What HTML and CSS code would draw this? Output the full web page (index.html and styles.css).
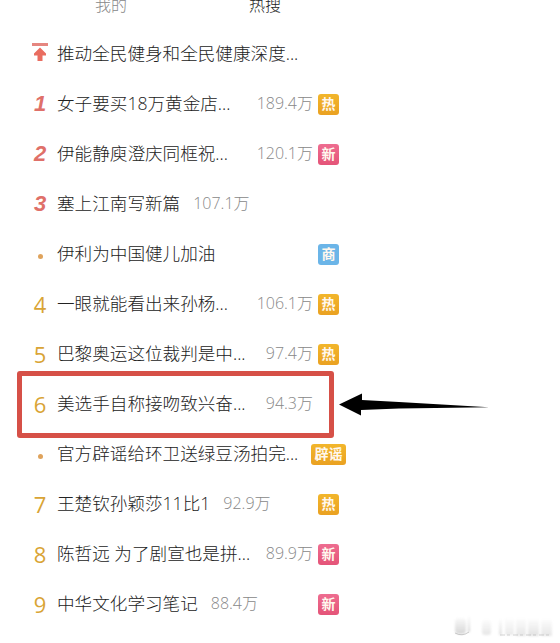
FILE: index.html
```html
<!DOCTYPE html>
<html lang="zh-CN">
  <head>
    <meta charset="UTF-8" />
    <meta name="viewport" content="width=device-width, initial-scale=1" />
    <title>热搜</title>
    <link rel="stylesheet" href="styles.css">
  </head>
  <body>
    <div class="tabs">
      <span class="tab">我的</span>
      <span class="tab active">热搜</span>
    </div>

    <ul class="hot-list">
      <li class="row">
        <span class="rank">
          <svg class="pin" width="16" height="19" viewBox="0 0 16 19">
            <rect x="0" y="0" width="16" height="3" fill="#e58680" />
            <path d="M8 4.5L14 10.5V12.5H10.5V18H5.5V12.5H2V10.5Z" fill="#e96d60" />
          </svg>
        </span>
        <div class="main"><span class="title">推动全民健身和全民健康深度...</span></div>
      </li>
      <li class="row">
        <span class="rank top">1</span>
        <div class="main cut"><span class="title">女子要买18万黄金店...</span><span class="heat">189.4万</span></div>
        <span class="tag hot">热</span>
      </li>
      <li class="row">
        <span class="rank top">2</span>
        <div class="main cut"><span class="title">伊能静庾澄庆同框祝...</span><span class="heat">120.1万</span></div>
        <span class="tag new">新</span>
      </li>
      <li class="row">
        <span class="rank top">3</span>
        <div class="main"><span class="title">塞上江南写新篇</span><span class="heat">107.1万</span></div>
      </li>
      <li class="row">
        <span class="rank"><i class="dot"></i></span>
        <div class="main"><span class="title">伊利为中国健儿加油</span></div>
        <span class="tag ad">商</span>
      </li>
      <li class="row">
        <span class="rank">4</span>
        <div class="main cut"><span class="title">一眼就能看出来孙杨...</span><span class="heat">106.1万</span></div>
        <span class="tag hot">热</span>
      </li>
      <li class="row">
        <span class="rank">5</span>
        <div class="main cut"><span class="title">巴黎奥运这位裁判是中...</span><span class="heat">97.4万</span></div>
        <span class="tag hot">热</span>
      </li>
      <li class="row">
        <span class="rank">6</span>
        <div class="main cut"><span class="title">美选手自称接吻致兴奋...</span><span class="heat">94.3万</span></div>
        <div class="mark"></div>
        <svg class="arrow" width="152" height="24" viewBox="0 0 152 24">
          <path d="M0 11.5L23 0.5V7L60 9L150 14.2L60 15.5L22 17V22.5Z" fill="#000" />
        </svg>
      </li>
      <li class="row">
        <span class="rank"><i class="dot"></i></span>
        <div class="main"><span class="title">官方辟谣给环卫送绿豆汤拍完...</span></div>
        <span class="tag hot wide">辟谣</span>
      </li>
      <li class="row">
        <span class="rank">7</span>
        <div class="main"><span class="title">王楚钦孙颖莎11比1</span><span class="heat">92.9万</span></div>
        <span class="tag hot">热</span>
      </li>
      <li class="row">
        <span class="rank">8</span>
        <div class="main cut"><span class="title">陈哲远 为了剧宣也是拼...</span><span class="heat">89.9万</span></div>
        <span class="tag new">新</span>
      </li>
      <li class="row">
        <span class="rank">9</span>
        <div class="main"><span class="title">中华文化学习笔记</span><span class="heat">88.4万</span></div>
        <span class="tag new">新</span>
      </li>
    </ul>

    <!-- faded watermark -->
    <svg class="watermark" width="106" height="26" viewBox="0 0 106 26">
      <defs>
        <linearGradient id="fade" x1="0" y1="0" x2="0" y2="1">
          <stop offset="0" stop-color="#999" stop-opacity="0.05" />
          <stop offset="1" stop-color="#999" stop-opacity="0.4" />
        </linearGradient>
      </defs>
      <g class="smudge" fill="url(#fade)">
        <rect x="5" y="3" width="11" height="16" rx="4" />
        <rect x="18" y="2" width="2" height="15" />
        <rect x="32" y="5" width="9" height="15" rx="3" opacity="0.6" />
        <rect x="49" y="5" width="3" height="15" opacity="0.7" />
        <rect x="55" y="4" width="9" height="16" opacity="0.5" />
        <rect x="66" y="4" width="10" height="17" opacity="0.6" />
        <rect x="78" y="5" width="11" height="16" opacity="0.7" />
        <rect x="91" y="5" width="11" height="16" opacity="0.6" />
      </g>
      <path d="M5 18Q12 22 19 17" fill="none" stroke="#999" stroke-opacity="0.5" />
      <path d="M50 20H102" fill="none" stroke="#999" stroke-opacity="0.4" stroke-dasharray="5 2 3 3" />
    </svg>
  </body>
</html>
```

FILE: styles.css
```css
* {
  box-sizing: border-box;
}
body {
  position: relative;
  margin: 0;
  height: 643px;
  overflow: hidden;
  background: #fff;
  color: #222;
  font-family: "Open Sans", "Noto Sans CJK SC", sans-serif;
  font-weight: 300;
}
.tabs {
  display: flex;
  height: 29px;
  padding-left: 34px;
}
.tab {
  width: 154px;
  margin-top: -7px;
  text-align: center;
  font-size: 16px;
  line-height: 24px;
  color: #888;
}
.tab.active {
  color: #222;
}
.hot-list {
  list-style: none;
  margin: 0;
  padding: 0;
}
.row {
  position: relative;
  display: flex;
  align-items: center;
  width: 346px;
  height: 50px;
  padding-left: 23px;
}
.rank {
  display: flex;
  justify-content: center;
  width: 34px;
  font-size: 22px;
  font-weight: 500;
  line-height: 30px;
  color: #d9a435;
}
.rank.top {
  font-family: "Liberation Sans", sans-serif;
  font-size: 22px;
  font-weight: 700;
  font-style: italic;
  color: #df7069;
}
.pin {
  display: block;
  margin-bottom: 4px;
}
.dot {
  width: 5px;
  height: 5px;
  margin-top: 5px;
  margin-left: 1px;
  border-radius: 50%;
  background: #dfa35c;
}
.main {
  display: flex;
  align-items: center;
  width: 256px;
  flex-shrink: 0;
  padding-bottom: 2px;
  white-space: nowrap;
  line-height: 26px;
}
.cut {
  justify-content: space-between;
}
.title {
  font-size: 17.6px;
}
.heat {
  margin-left: 13px;
  font-size: 16px;
  color: #888;
}
.cut .heat {
  margin-left: 0;
}
.tag {
  width: 21px;
  height: 21px;
  margin-left: 5px;
  border-radius: 3px;
  color: #fff8ee;
  font-size: 14px;
  font-weight: 700;
  line-height: 20px;
  text-align: center;
}
.hot {
  background: linear-gradient(#f2b62c, #eaa121);
}
.new {
  background: linear-gradient(#ee6d90, #e45478);
}
.ad {
  background: #6bb5e8;
}
.wide {
  flex-shrink: 0;
  width: 35px;
  margin-left: -2px;
}
.mark {
  position: absolute;
  left: 17px;
  top: -8px;
  width: 317px;
  height: 67px;
  border: 5px solid #d65047;
  border-radius: 3px;
}
.arrow {
  position: absolute;
  left: 339px;
  top: 14px;
}
.watermark {
  position: absolute;
  left: 450px;
  top: 615px;
}
.smudge {
  filter: blur(1px);
}
```
